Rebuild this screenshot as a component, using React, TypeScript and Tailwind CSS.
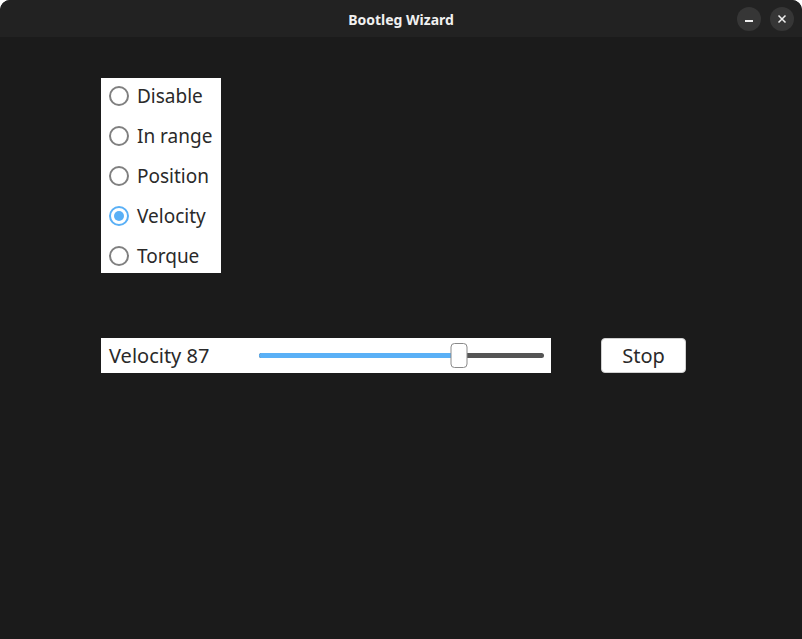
import { useState } from "react";

const modes = ["Disable", "In range", "Position", "Velocity", "Torque"];

const Radio = ({ label, checked, onSelect }: { label: string; checked: boolean; onSelect: () => void }) => (
	<div className="flex h-10 items-center gap-[8px] cursor-pointer" onClick={onSelect}>
		<div
			className={
				"flex h-[20px] w-[20px] items-center justify-center rounded-full border-2 " +
				(checked ? "border-[#5ab0f6]" : "border-[#808080]")
			}
		>
			{checked && <div className="h-[10px] w-[10px] rounded-full bg-[#5ab0f6]" />}
		</div>
		<span className="text-[19px] leading-none text-[#2a2a2a]">{label}</span>
	</div>
);

export default function App() {
	const [mode, setMode] = useState("Velocity");
	const velocity = 87;
	const pct = velocity / 124;

	return (
		<div className="flex h-[639px] w-[802px] flex-col overflow-hidden rounded-t-[10px] bg-[#1b1b1b] font-['Noto_Sans',sans-serif]">
			<div className="relative flex h-[37px] shrink-0 items-center justify-center bg-[#222222] pt-[2px]">
				<span className="text-[14px] font-bold text-[#f0f0f0]">Bootleg Wizard</span>
				<div className="absolute right-[8px] top-[7px] flex gap-[9px]">
					<button className="flex h-[24px] w-[24px] items-center justify-center rounded-full bg-[#363636]">
						<div className="mt-[4px] h-[1.5px] w-[8px] bg-[#eeeeee]" />
					</button>
					<button className="flex h-[24px] w-[24px] items-center justify-center rounded-full bg-[#363636]">
						<svg width="10" height="10" viewBox="0 0 10 10">
							<path d="M1.5 1.5 L8.5 8.5 M8.5 1.5 L1.5 8.5" stroke="#eeeeee" strokeWidth="1.5" />
						</svg>
					</button>
				</div>
			</div>

			<div className="flex flex-col pl-[101px] pt-[41px]">
				<div className="h-[195px] w-[120px] overflow-hidden bg-white pl-[8px]">
					<div className="-mt-[2px] flex flex-col">
						{modes.map((m) => (
							<Radio key={m} label={m} checked={mode === m} onSelect={() => setMode(m)} />
						))}
					</div>
				</div>

				<div className="mt-[65px] flex items-center">
					<div className="flex h-[35px] w-[450px] items-center bg-white pl-[8px] pr-[7px]">
						<span className="w-[150px] text-[20px] leading-none text-[#2a2a2a]">Velocity {velocity}</span>
						<div className="relative flex h-[25px] flex-1 items-center">
							<div className="h-[5px] w-full rounded-full bg-[#555555]" />
							<div
								className="absolute left-0 h-[5px] rounded-full bg-[#5ab0f6]"
								style={{ width: `${pct * 100}%` }}
							/>
							<div
								className="absolute h-[25px] w-[17px] -translate-x-1/2 rounded-[4px] border border-[#8a8a8a] bg-white"
								style={{ left: `${pct * 100}%` }}
							/>
						</div>
					</div>
					<button className="ml-[50px] flex h-[35px] w-[85px] items-center justify-center rounded-[4px] border border-[#d0d0d0] bg-white text-[20px] text-[#2a2a2a]">
						Stop
					</button>
				</div>
			</div>
		</div>
	);
}
